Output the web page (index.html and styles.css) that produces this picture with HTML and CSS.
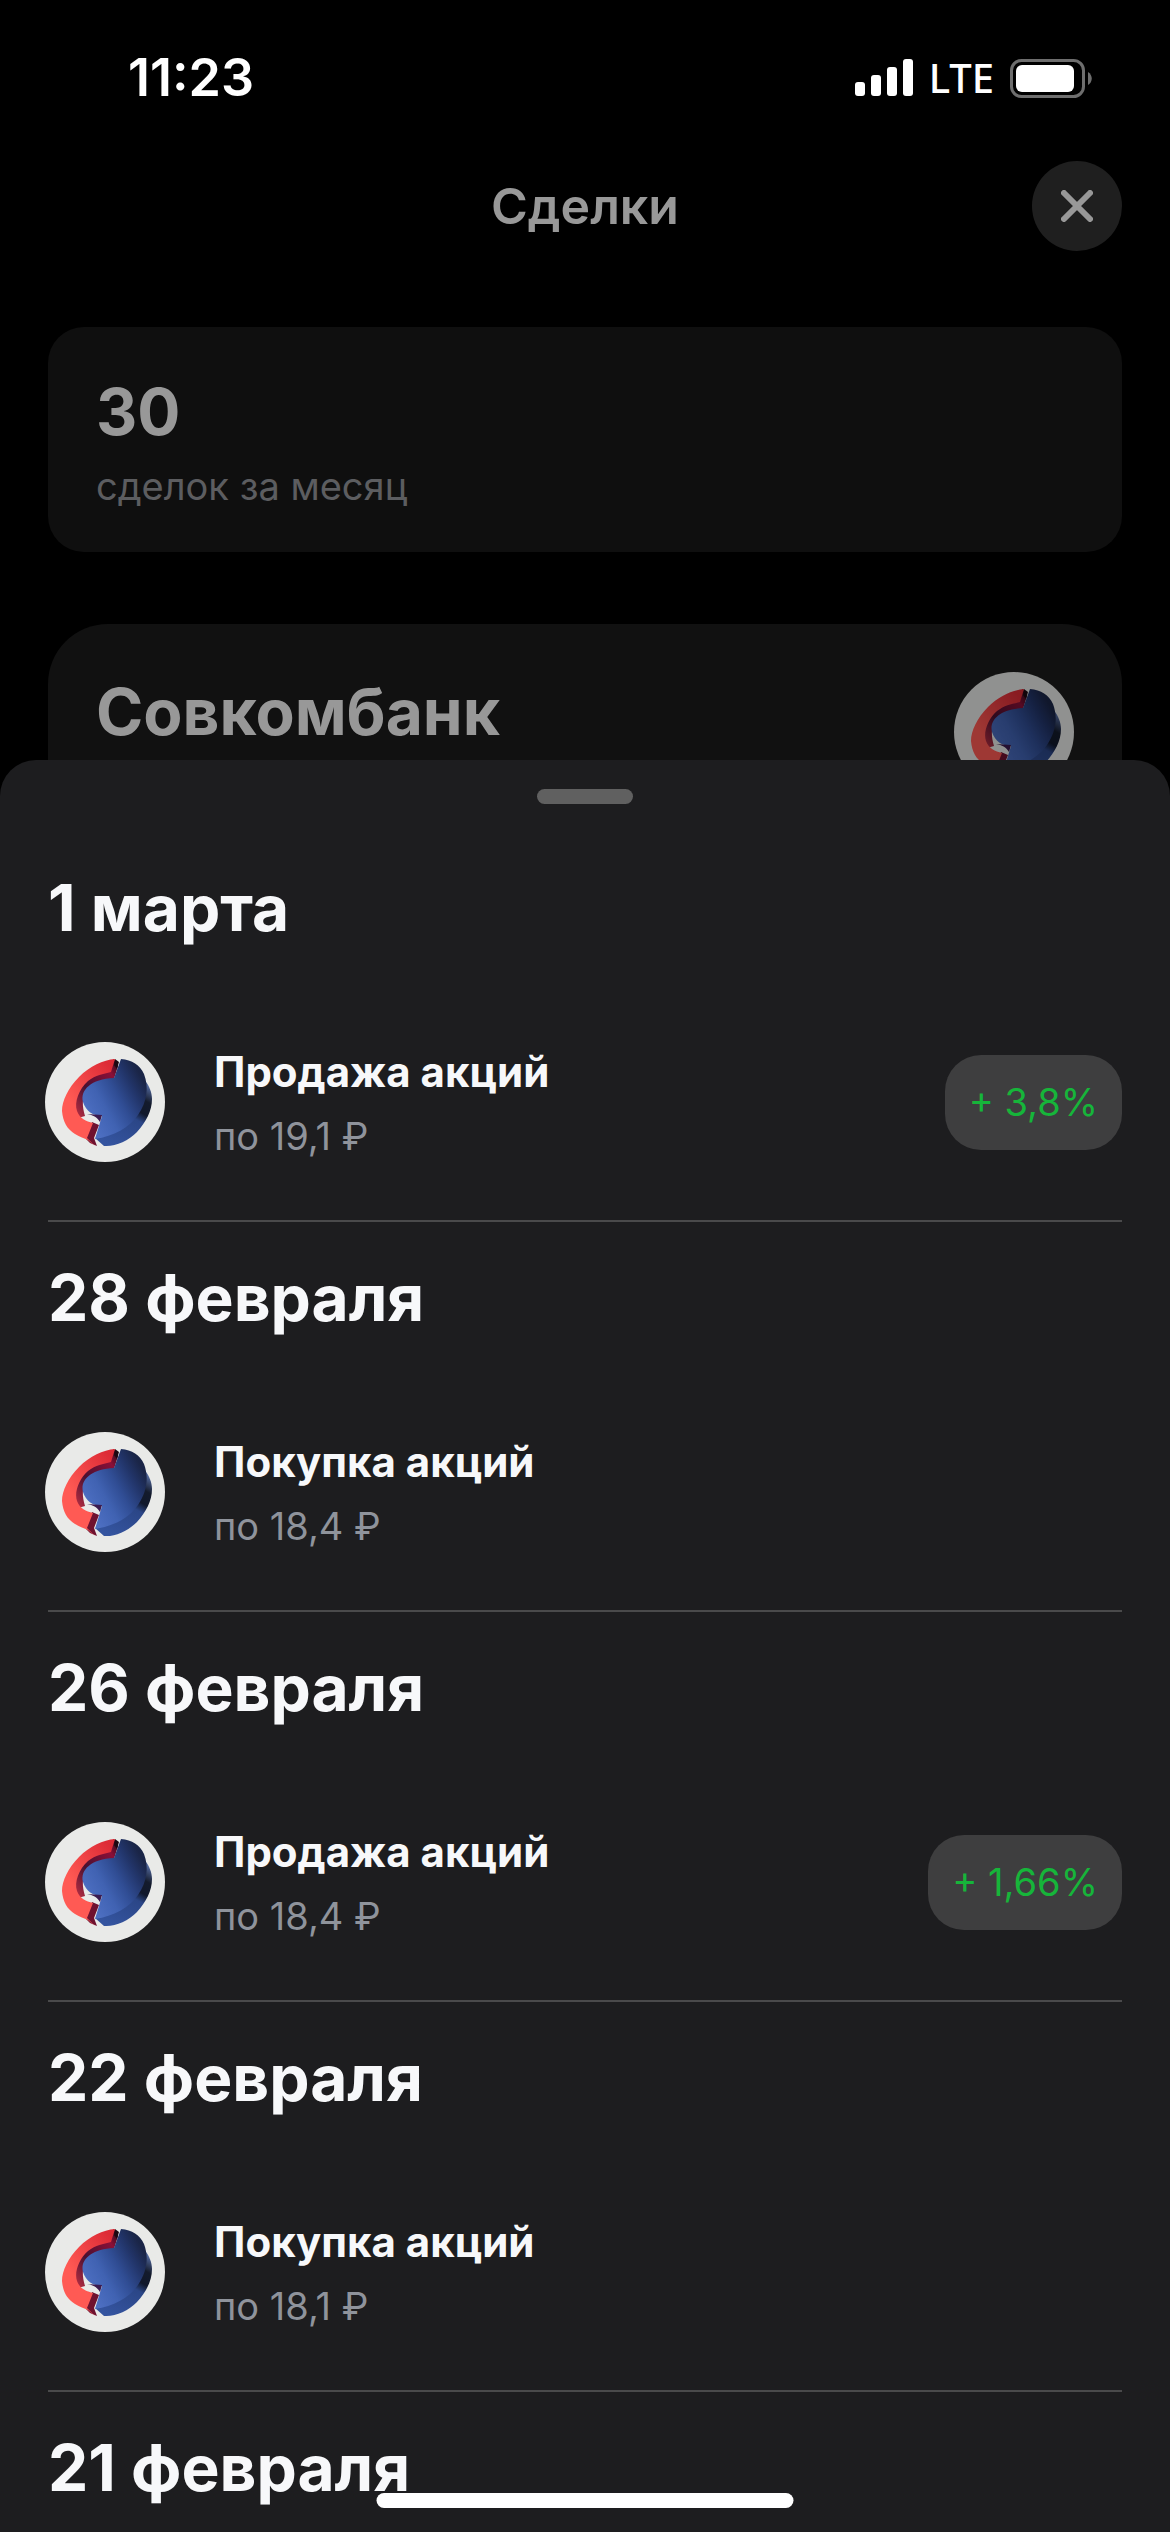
FILE: index.html
```html
<!DOCTYPE html>
<html lang="ru">
<head>
    <meta charset="UTF-8">
    <meta name="viewport" content="width=device-width, initial-scale=1.0">
    <title>Сделки</title>
    <link rel="stylesheet" href="styles.css">
</head>
<body>
    <!-- Bank logo, reused by the card and every deal row -->
    <svg class="sprite" aria-hidden="true">
        <defs>
            <linearGradient id="red" x1="0.8" y1="0" x2="0.3" y2="0.6">
                <stop offset="0" stop-color="#dd2b36"/>
                <stop offset="1" stop-color="#ff5a54"/>
            </linearGradient>
            <linearGradient id="maroon" x1="1" y1="0" x2="0" y2="1">
                <stop offset="0" stop-color="#1c0812"/>
                <stop offset="0.2" stop-color="#8a1038"/>
                <stop offset="0.6" stop-color="#4a1030"/>
                <stop offset="1" stop-color="#c83345"/>
            </linearGradient>
            <linearGradient id="blue" x1="0.1" y1="0.75" x2="0.9" y2="0.2">
                <stop offset="0" stop-color="#4d6fc2"/>
                <stop offset="0.3" stop-color="#4062b2"/>
                <stop offset="0.55" stop-color="#304d94"/>
                <stop offset="0.8" stop-color="#22356a"/>
                <stop offset="1" stop-color="#1a2547"/>
            </linearGradient>
            <linearGradient id="side" x1="0.8" y1="0" x2="0.3" y2="1">
                <stop offset="0" stop-color="#50669a"/>
                <stop offset="0.2" stop-color="#141b2c"/>
                <stop offset="0.38" stop-color="#10182c"/>
                <stop offset="0.5" stop-color="#2b4687"/>
                <stop offset="1" stop-color="#34549f"/>
            </linearGradient>
            <symbol id="logo" viewBox="0 0 120 120">
                <circle cx="60" cy="60" r="60" fill="#e9eae8"/>
                <path fill="url(#maroon)" d="M69 17L73 24L69 37C57 38 47 42 41 49C37 56 37 64 40 74L33 76L28 60L40 38Z"/>
                <path fill="#6f1230" d="M47 80L54 83L49 96L52 104L45 101L41 97Z"/>
                <path fill="#1c0812" d="M70 17L74 20L72 27L69 23Z"/>
                <path fill="url(#red)" d="M70 17C58 18 45 24 34 35C23 46 17 59 17 69C18 80 22 87 30 92C35 95 39 96 43 98L50 104L42 96L48 81C41 79 35 77 32 69C29 60 34 47 43 39C51 33 58 32 66 30Z"/>
                <path fill="url(#side)" d="M101 40C104 44 107 50 107 57C107 69 101 80 92 90C83 99 70 105 59 104L50 96L80 84Z"/>
                <path fill="url(#blue)" d="M76 17C87 18 95 23 99 32C104 45 102 60 93 73C84 86 69 94 50 97L57 74C48 74 41 69 38 60C35 48 46 37 69 36Z"/>
                <path fill="#3b1c50" d="M42 72L57 73L55 80C52 75 48 73 42 72Z"/>
            </symbol>
        </defs>
    </svg>

    <div class="screen">
        <div class="status-bar">
            <span class="time">11:23</span>
            <div class="status-icons">
                <svg class="signal" viewBox="0 0 58 38" aria-hidden="true">
                    <rect x="0" y="23" width="10" height="14" rx="3"/>
                    <rect x="16" y="16" width="10" height="21" rx="3"/>
                    <rect x="32" y="8" width="10" height="29" rx="3"/>
                    <rect x="48" y="0" width="10" height="37" rx="3"/>
                </svg>
                <span class="network">LTE</span>
                <svg class="battery" viewBox="0 0 82 39" aria-hidden="true">
                    <rect x="1.5" y="1.5" width="72" height="36" rx="10" fill="none" stroke="#6e6e6e" stroke-width="3"/>
                    <rect x="6" y="6" width="58" height="27" rx="6" fill="#fff"/>
                    <path d="M78 13C83 16 83 23 78 26Z" fill="#6e6e6e"/>
                </svg>
            </div>
        </div>

        <header class="header">
            <h1 class="title">Сделки</h1>
            <button class="close-button" type="button" aria-label="Закрыть">
                <svg viewBox="0 0 32 32" aria-hidden="true">
                    <path d="M3 3L29 29M29 3L3 29"/>
                </svg>
            </button>
        </header>

        <div class="summary">
            <p class="summary-count">30</p>
            <p class="summary-label">сделок за месяц</p>
        </div>

        <div class="company">
            <h2 class="company-name">Совкомбанк</h2>
            <svg class="logo dimmed"><use href="#logo"/></svg>
        </div>

        <main class="sheet">
            <div class="grabber"></div>

            <section class="day">
                <h2 class="date">1 марта</h2>
                <div class="deal">
                    <svg class="logo"><use href="#logo"/></svg>
                    <div class="deal-info">
                        <h3 class="deal-name">Продажа акций</h3>
                        <p class="deal-price">по 19,1 ₽</p>
                    </div>
                    <span class="profit">+ 3,8%</span>
                </div>
            </section>

            <section class="day">
                <h2 class="date">28 февраля</h2>
                <div class="deal">
                    <svg class="logo"><use href="#logo"/></svg>
                    <div class="deal-info">
                        <h3 class="deal-name">Покупка акций</h3>
                        <p class="deal-price">по 18,4 ₽</p>
                    </div>
                </div>
            </section>

            <section class="day">
                <h2 class="date">26 февраля</h2>
                <div class="deal">
                    <svg class="logo"><use href="#logo"/></svg>
                    <div class="deal-info">
                        <h3 class="deal-name">Продажа акций</h3>
                        <p class="deal-price">по 18,4 ₽</p>
                    </div>
                    <span class="profit">+ 1,66%</span>
                </div>
            </section>

            <section class="day">
                <h2 class="date">22 февраля</h2>
                <div class="deal">
                    <svg class="logo"><use href="#logo"/></svg>
                    <div class="deal-info">
                        <h3 class="deal-name">Покупка акций</h3>
                        <p class="deal-price">по 18,1 ₽</p>
                    </div>
                </div>
            </section>

            <section class="day">
                <h2 class="date">21 февраля</h2>
            </section>
        </main>

        <div class="home-indicator"></div>
    </div>
</body>
</html>
```

FILE: styles.css
```css
* {
    box-sizing: border-box;
}

body {
    background-color: #000;
    color: #f7f8fa;
    font-family: Inter, "Liberation Sans", sans-serif;
    margin: 0;
}

h1, h2, h3, p {
    margin: 0;
}

.sprite {
    position: absolute;
    width: 0;
    height: 0;
}

.screen {
    display: flex;
    flex-direction: column;
    min-height: 100vh;
}

/* Status bar */
.status-bar {
    display: flex;
    justify-content: space-between;
    align-items: center;
    padding: 48px 78px 0 128px;
    color: #fff;
}

.time {
    font-size: 52px;
    font-weight: 600;
    line-height: 60px;
}

.status-icons {
    display: flex;
    align-items: center;
    gap: 16px;
}

.signal {
    width: 58px;
    height: 38px;
    fill: #fff;
}

.network {
    font-family: "Noto Sans", sans-serif;
    font-size: 40px;
    font-weight: 500;
    line-height: 60px;
}

.battery {
    width: 82px;
    height: 39px;
}

/* Screen behind the sheet */
.header {
    display: grid;
    grid-template-columns: 90px 1fr 90px;
    align-items: center;
    padding: 53px 48px 76px;
}

.title {
    grid-column: 2;
    color: #989898;
    font-size: 50px;
    font-weight: 600;
    line-height: 60px;
    text-align: center;
}

.close-button {
    display: flex;
    justify-content: center;
    align-items: center;
    width: 90px;
    height: 90px;
    padding: 0;
    border: none;
    border-radius: 50%;
    background-color: #1f1f1f;
    cursor: pointer;
}

.close-button svg {
    width: 32px;
    height: 32px;
    fill: none;
    stroke: #989898;
    stroke-width: 6;
    stroke-linecap: round;
}

.summary {
    margin: 0 48px 72px;
    padding: 45px 48px 32px;
    border-radius: 36px;
    background-color: #0f0f0f;
}

.summary-count {
    color: #989898;
    font-size: 64px;
    font-weight: 700;
    line-height: 80px;
}

.summary-label {
    padding: 2px 0;
    color: #5c5d60;
    font-size: 38px;
    line-height: 64px;
}

.company {
    display: flex;
    justify-content: space-between;
    align-items: flex-start;
    margin: 0 48px;
    padding: 48px 48px 0;
    border-radius: 60px 60px 0 0;
    background-color: #111;
}

.company-name {
    color: #989898;
    font-size: 64px;
    font-weight: 700;
    line-height: 80px;
}

.logo {
    flex: none;
    width: 120px;
    height: 120px;
}

.dimmed {
    filter: brightness(0.62);
}

/* Bottom sheet */
.sheet {
    position: relative;
    flex: 1;
    margin-top: -32px;
    padding-top: 29px;
    border-radius: 36px 36px 0 0;
    background-color: #1d1d1f;
}

.grabber {
    width: 96px;
    height: 15px;
    margin: 0 auto 28px;
    border-radius: 8px;
    background-color: #606060;
}

.day {
    margin: 0 48px;
    padding-top: 36px;
    border-bottom: 2px solid #4a4a4b;
}

.day:last-child {
    border-bottom: none;
}

.date {
    font-size: 64px;
    font-weight: 700;
    line-height: 80px;
}

.deal {
    display: flex;
    align-items: center;
    gap: 49px;
    height: 120px;
    margin: 94px 0 58px -3px;
}

.deal-info {
    flex: 1;
    padding-top: 3px;
}

.deal-name {
    font-size: 42px;
    font-weight: 700;
    line-height: 64px;
}

.deal-price {
    color: #8f939b;
    font-size: 38px;
    line-height: 64px;
}

.profit {
    padding: 0 24px;
    border-radius: 36px;
    background-color: #3e3e3f;
    color: #16b53a;
    font-size: 38px;
    line-height: 95px;
}

.home-indicator {
    position: fixed;
    bottom: 24px;
    left: 50%;
    width: 417px;
    height: 15px;
    border-radius: 8px;
    background-color: #fff;
    transform: translateX(-50%);
}
```
